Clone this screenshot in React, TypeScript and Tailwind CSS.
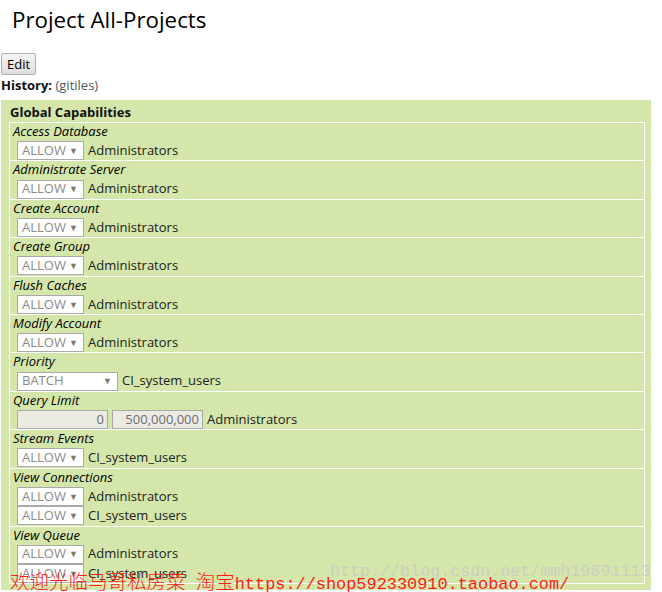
import React from "react";

type Rule = { kind: "allow" | "batch" | "range"; group: string };
type Capability = { name: string; rules: Rule[] };

const capabilities: Capability[] = [
  { name: "Access Database", rules: [{ kind: "allow", group: "Administrators" }] },
  { name: "Administrate Server", rules: [{ kind: "allow", group: "Administrators" }] },
  { name: "Create Account", rules: [{ kind: "allow", group: "Administrators" }] },
  { name: "Create Group", rules: [{ kind: "allow", group: "Administrators" }] },
  { name: "Flush Caches", rules: [{ kind: "allow", group: "Administrators" }] },
  { name: "Modify Account", rules: [{ kind: "allow", group: "Administrators" }] },
  { name: "Priority", rules: [{ kind: "batch", group: "CI_system_users" }] },
  { name: "Query Limit", rules: [{ kind: "range", group: "Administrators" }] },
  { name: "Stream Events", rules: [{ kind: "allow", group: "CI_system_users" }] },
  {
    name: "View Connections",
    rules: [
      { kind: "allow", group: "Administrators" },
      { kind: "allow", group: "CI_system_users" },
    ],
  },
  {
    name: "View Queue",
    rules: [
      { kind: "allow", group: "Administrators" },
      { kind: "allow", group: "CI_system_users" },
    ],
  },
];

function FakeSelect({ label, width }: { label: string; width: string }) {
  return (
    <span
      className={`${width} inline-flex h-[19px] items-center justify-between border border-[#a9a9a9] bg-white pl-[4px] pr-[5px] text-[13px] text-[#8a8a8a]`}
    >
      <span>{label}</span>
      <span className="text-[9px] text-[#777]">▼</span>
    </span>
  );
}

function RuleLine({ rule }: { rule: Rule }) {
  return (
    <div className="flex h-[19.5px] items-center gap-[4px] pl-[7px]">
      {rule.kind === "allow" && <FakeSelect label="ALLOW" width="w-[67px]" />}
      {rule.kind === "batch" && <FakeSelect label="BATCH" width="w-[101px]" />}
      {rule.kind === "range" && (
        <>
          <span className="inline-flex h-[19px] w-[91px] items-center justify-end border border-[#a9a9a9] bg-[#ebebe4] pr-[3px] text-[13px] text-[#6d6d6d]">
            0
          </span>
          <span className="inline-flex h-[19px] w-[91px] items-center justify-end border border-[#a9a9a9] bg-[#ebebe4] pr-[3px] text-[13px] text-[#6d6d6d]">
            500,000,000
          </span>
        </>
      )}
      <span className="text-[13px] text-[#222]">{rule.group}</span>
    </div>
  );
}

export default function App() {
  return (
    <div className="relative h-[592px] w-[662px] overflow-hidden bg-white font-['Open_Sans','Liberation_Sans',sans-serif] text-[#111]">
      <h1 className="pl-[12px] pt-[5px] text-[22.3px] leading-[30px] text-black">Project All-Projects</h1>

      <div className="mt-[16px] pl-[1px]">
        <button className="h-[22px] rounded-[2px] border border-[#adadad] bg-gradient-to-b from-[#f4f4f4] to-[#dedede] px-[5px] text-[13px] leading-[18px] text-black">
          Edit
        </button>
      </div>
      <div className="pl-[1px] pt-[2px] text-[13px] leading-[17px]">
        <span className="font-bold">History:</span> <span className="text-[#555]">(gitiles)</span>
      </div>

      <div className="ml-[1px] mt-[6px] w-[650px] bg-[#d4e6a9] pb-[6px] pl-[8px] pr-[6px] pt-[3px]">
        <div className="pl-[1px] text-[13px] font-bold leading-[18px]">Global Capabilities</div>
        <div className="mt-[1px] border border-white">
          {capabilities.map((cap, i) => (
            <div key={cap.name} className={i === 0 ? "" : "border-t border-white"}>
              <div className="pl-[3px] text-[13px] italic leading-[17.9px] text-black">{cap.name}</div>
              {cap.rules.map((r, j) => (
                <RuleLine key={j} rule={r} />
              ))}
            </div>
          ))}
        </div>
      </div>

      {/* watermarks over the page */}
      <div className="absolute left-[330px] top-[562px] font-['Liberation_Mono',monospace] text-[16.7px] leading-[20px] text-[#c8c8c8]/80">
        http://blog.csdn.net/mmh19891113
      </div>
      <div className="absolute left-[10px] top-[570px] flex items-baseline whitespace-pre text-[#ff1a1a]">
        <span className="font-['Noto_Sans_CJK_SC',sans-serif] text-[19.5px] font-light leading-[22px]">欢迎光临马哥私房菜</span>
        <span className="font-['Liberation_Mono',monospace] text-[17px] leading-[22px]"> </span>
        <span className="font-['Noto_Sans_CJK_SC',sans-serif] text-[19.5px] font-light leading-[22px]">淘宝</span>
        <span className="font-['Liberation_Mono',monospace] text-[16.9px] leading-[22px]">https://shop592330910.taobao.com/</span>
      </div>
    </div>
  );
}
